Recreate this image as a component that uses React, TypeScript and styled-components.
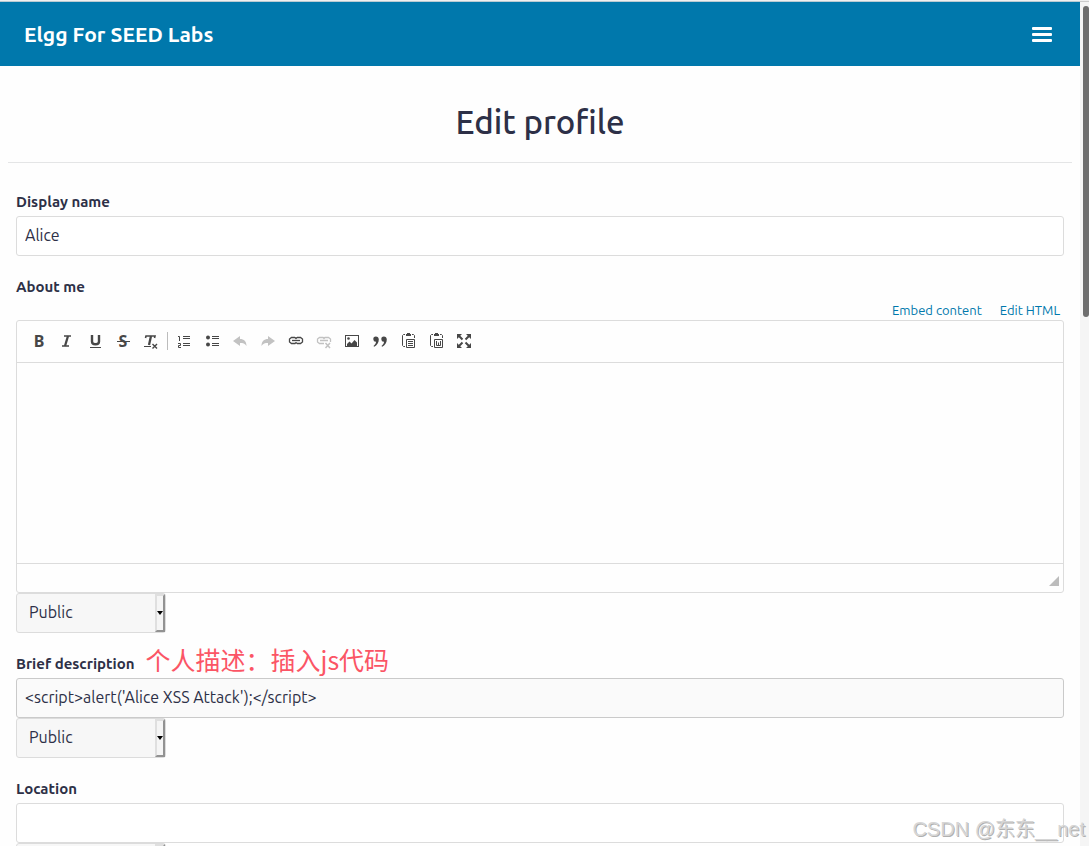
import React from "react";
import styled, { createGlobalStyle } from "styled-components";

const GlobalStyle = createGlobalStyle`
  *, *::before, *::after { box-sizing: border-box; }
  body {
    margin: 0;
    background: #fefefe;
    color: #2d3047;
    font-family: Ubuntu, "Noto Sans", "Noto Sans CJK SC", sans-serif;
    font-size: 16px;
  }
  button, input, select, textarea { font: inherit; color: inherit; }
`;

const Viewport = styled.div`
  position: relative;
  display: grid;
  grid-template-columns: minmax(0, 1fr) 9px;
  height: 100vh;
  overflow: hidden;
  border-top: 1px solid #f0f0f0;
`;

const Page = styled.div`
  overflow: hidden;
  border-top: 1px solid #b9cbd3;
`;

const ScrollTrack = styled.div`
  padding: 4px 0 0 3px;
  background: #f5f5f5;
  border-top: 1px solid #cccccc;
`;

const ScrollThumb = styled.div`
  height: 37%;
  border-radius: 3px;
  background: #6e6e6e;
`;

const Topbar = styled.header`
  display: flex;
  align-items: center;
  justify-content: space-between;
  height: 64px;
  padding: 0 28px 0 24px;
  background: #0078ac;
`;

const SiteLink = styled.a`
  color: #ffffff;
  font-size: 21px;
  font-weight: 700;
  text-decoration: none;
`;

const MenuButton = styled.button`
  display: flex;
  flex-direction: column;
  gap: 3px;
  width: 20px;
  padding: 0;
  border: 0;
  background: none;
`;

const MenuBar = styled.span`
  height: 3px;
  border-radius: 1px;
  background: #ffffff;
`;

const Main = styled.main`
  padding: 0 8px;
`;

const TitleRow = styled.div`
  display: flex;
  align-items: center;
  justify-content: center;
  height: 97px;
  padding-top: 16px;
  border-bottom: 1px solid #e4e5e6;
`;

const Title = styled.h1`
  margin: 0;
  font-size: 33px;
  font-weight: 500;
  line-height: 40px;
`;

const Form = styled.form`
  display: flex;
  flex-direction: column;
  gap: 20px;
  padding: 28px 8px 0;
`;

const Field = styled.div`
  display: flex;
  flex-direction: column;
`;

const LabelRow = styled.div`
  display: flex;
  align-items: center;
  gap: 11px;
  height: 25px;
  padding-bottom: 3px;
`;

const Label = styled.label`
  font-size: 15px;
  font-weight: 700;
  line-height: 22px;
`;

const Note = styled.span`
  padding-bottom: 10px;
  color: #fb5565;
  font-family: "Noto Sans CJK SC", sans-serif;
  font-size: 25px;
  line-height: 22px;
  white-space: nowrap;
`;

const TextInput = styled.input<{ $active?: boolean }>`
  width: 100%;
  height: 40px;
  padding: 0 8px 2px;
  border: 1px solid ${(p) => (p.$active ? "#cacaca" : "#dcdcdc")};
  border-radius: 3px;
  background: ${(p) => (p.$active ? "#fafafa" : "#ffffff")};
  outline: none;
`;

const EditorLinks = styled.nav`
  display: flex;
  justify-content: flex-end;
  gap: 18px;
  height: 19px;
  padding-right: 4px;
`;

const EditorLink = styled.a`
  color: #0078ac;
  font-size: 13px;
  line-height: 19px;
  text-decoration: none;
`;

const EditorBox = styled.div`
  border: 1px solid #dcdcdc;
  border-radius: 3px;
`;

const Toolbar = styled.div`
  display: flex;
  align-items: center;
  height: 42px;
  padding: 0 8px 2px;
  border-bottom: 1px solid #dcdcdc;
`;

const ToolButton = styled.button<{ $muted?: boolean }>`
  display: flex;
  align-items: center;
  justify-content: center;
  width: 28px;
  height: 28px;
  padding: 0;
  border: 0;
  background: none;
  color: ${(p) => (p.$muted ? "#c2c2c2" : "#474747")};

  svg { overflow: visible; }
`;

const ToolSeparator = styled.span`
  width: 1px;
  height: 18px;
  margin: 0 2px;
  background: #bcbcbc;
`;

const EditorArea = styled.textarea`
  display: block;
  width: 100%;
  height: 200px;
  padding: 12px;
  border: 0;
  background: transparent;
  outline: none;
  resize: none;
`;

const EditorFooter = styled.div`
  display: flex;
  align-items: flex-end;
  justify-content: flex-end;
  height: 29px;
  padding: 0 4px 6px;
  border-top: 1px solid #dcdcdc;
`;

const SelectWrap = styled.div`
  position: relative;
  width: 150px;
  height: 40px;
`;

const Select = styled.select`
  appearance: none;
  width: 100%;
  height: 100%;
  padding: 0 12px 2px;
  border: 1px solid #dcdcdc;
  border-radius: 3px;
  background: #f7f7f7;
  outline: none;
`;

const SelectArrow = styled.span`
  position: absolute;
  top: 1px;
  right: 1px;
  bottom: 1px;
  display: flex;
  align-items: center;
  justify-content: center;
  width: 10px;
  border: 2px solid;
  border-color: #dfdfdf #929292 #929292 #dfdfdf;
  background: #f5f5f5;
  pointer-events: none;
`;

const Watermark = styled.span`
  position: absolute;
  right: 4px;
  bottom: 4px;
  color: #d6d6d6;
  font-family: "Liberation Sans", "Noto Sans CJK SC", sans-serif;
  font-size: 20px;
  line-height: 26px;
  text-shadow: 1px 1px 0 #b0b0b0;
  pointer-events: none;
`;

function Icon({ children }: { children: React.ReactNode }) {
  return (
    <svg width="16" height="16" viewBox="0 0 16 16" fill="none" stroke="currentColor" aria-hidden="true">
      {children}
    </svg>
  );
}

function Letter({ x, children }: { x: number; children: string }) {
  return (
    <text
      x={x}
      y="14"
      textAnchor="middle"
      fill="currentColor"
      stroke="none"
      fontFamily="Noto Sans, sans-serif"
      fontWeight="700"
      fontSize="16"
    >
      {children}
    </text>
  );
}

const undoPath = "M1 8 L8 3 V6 C12 6 14.500 8.500 14.500 13 C13 10.500 11 10 8 10 V13 Z";
const quotePath = "M3.800 3.500 A2.600 2.600 0 1 0 4 8.700 C4 10.500 3 11.800 1.500 13 L2.200 13.800 C5 12.500 6.800 9.500 6.800 6.500 C6.800 4.700 5.600 3.500 3.800 3.500 Z";

function Clipboard({ children }: { children: React.ReactNode }) {
  return (
    <Icon>
      <path d="M5 1.500 H3.500 L2.500 2.500 V12.500 L3.500 13.500 H5 M12 1.500 H13.500 L14.500 2.500 V5" />
      <path d="M6 1 H7 V0 H10 V1 H11 V3 H6 Z" fill="currentColor" stroke="none" />
      <path d="M6.500 6.500 H14.500 V14.500 H6.500 Z" />
      {children}
    </Icon>
  );
}

type Tool = { name: string; muted?: boolean; icon: React.ReactNode };

const textTools: Tool[] = [
  { name: "Bold", icon: <Icon><Letter x={8}>B</Letter></Icon> },
  {
    name: "Italic",
    icon: (
      <Icon>
        <path d="M5 3 H12 M3 13 H10" strokeWidth="1.500" />
        <path d="M9 3 L6 13" strokeWidth="2.300" />
      </Icon>
    ),
  },
  {
    name: "Underline",
    icon: (
      <Icon>
        <path d="M5 2 V8.500 Q5 11.300 8.500 11.300 Q12 11.300 12 8.500 V2" strokeWidth="2.400" />
        <path d="M3 14.500 H14" />
      </Icon>
    ),
  },
  {
    name: "Strikethrough",
    icon: (
      <Icon>
        <Letter x={8}>S</Letter>
        <path d="M2 8.500 H15" />
      </Icon>
    ),
  },
  {
    name: "Remove format",
    icon: (
      <Icon>
        <path d="M2.500 5 L3 3 H12 L11.500 5" strokeWidth="1.600" />
        <path d="M8 3 L6 12" strokeWidth="2.300" />
        <path d="M1 13.500 H8" />
        <path d="M9.500 11 L14 15.500 M14 11 L9.500 15.500" strokeWidth="1.400" />
      </Icon>
    ),
  },
];

const blockTools: Tool[] = [
  {
    name: "Numbered list",
    icon: (
      <Icon>
        <path d="M7 3.500 H14 M7 5.500 H14 M7 10.500 H14 M7 12.500 H14" />
        <path d="M2 3.500 H3.500 V8 M2 10.500 H4.500 V12.500 H2.500 V14.500 H5" />
      </Icon>
    ),
  },
  {
    name: "Bulleted list",
    icon: (
      <Icon>
        <path d="M8 3.500 H15 M8 5.500 H15 M8 10.500 H15 M8 12.500 H15" />
        <circle cx="4" cy="4.500" r="2" fill="currentColor" stroke="none" />
        <circle cx="4" cy="11.500" r="2" fill="currentColor" stroke="none" />
      </Icon>
    ),
  },
  { name: "Undo", muted: true, icon: <Icon><path d={undoPath} fill="currentColor" stroke="none" /></Icon> },
  {
    name: "Redo",
    muted: true,
    icon: <Icon><path d={undoPath} transform="translate(16 0) scale(-1 1)" fill="currentColor" stroke="none" /></Icon>,
  },
  {
    name: "Link",
    icon: (
      <Icon>
        <path d="M7 4.500 H3.500 L1.500 6 V9 L3.500 10.500 H7 L8 9.500 M9 4.500 H12.500 L14.500 6 V9 L12.500 10.500 H9 M7 4.500 L8 5.500 L9 4.500 M8 9.500 L9 10.500" strokeWidth="1.300" />
        <path d="M4 7.500 H12" strokeWidth="1.300" />
      </Icon>
    ),
  },
  {
    name: "Unlink",
    muted: true,
    icon: (
      <Icon>
        <path d="M8 10.500 H3.500 L1.500 9 V6 L3.500 4.500 H7 L8 5.500 L9 4.500 H12.500 L14.500 6 V9 M4 7.500 H12" strokeWidth="1.300" />
        <path d="M9.500 10 L14 15 M14 10 L9.500 15" strokeWidth="1.500" />
      </Icon>
    ),
  },
  {
    name: "Image",
    icon: (
      <Icon>
        <rect x="1.500" y="2.500" width="13" height="11" />
        <circle cx="4.500" cy="5.500" r="1.300" fill="currentColor" stroke="none" />
        <path d="M3 13 V11 L5.500 8.500 L7.500 10.500 L10.500 7 L13 9.500 V13 Z" fill="currentColor" stroke="none" />
      </Icon>
    ),
  },
  {
    name: "Block quote",
    icon: (
      <Icon>
        <path d={quotePath} fill="currentColor" stroke="none" />
        <path d={quotePath} transform="translate(8 0)" fill="currentColor" stroke="none" />
      </Icon>
    ),
  },
  {
    name: "Paste as plain text",
    icon: <Clipboard><path d="M8 8.500 H13 M8 10.500 H13 M8 12.500 H13" /></Clipboard>,
  },
  {
    name: "Paste from Word",
    icon: <Clipboard><path d="M8.500 8 V12.500 H12.500 V8 M10.500 9.500 V12.500" /></Clipboard>,
  },
  {
    name: "Maximize",
    icon: (
      <Icon>
        <path d="M1 1 H6 L1 6 Z M15 1 H10 L15 6 Z M1 15 H6 L1 10 Z M15 15 H10 L15 10 Z" fill="currentColor" stroke="none" />
        <path d="M3 3 L6.500 6.500 M13 3 L9.500 6.500 M3 13 L6.500 9.500 M13 13 L9.500 9.500" strokeWidth="2" />
      </Icon>
    ),
  },
];

function Tools({ items }: { items: Tool[] }) {
  return (
    <>
      {items.map((t) => (
        <ToolButton key={t.name} type="button" aria-label={t.name} $muted={t.muted}>
          {t.icon}
        </ToolButton>
      ))}
    </>
  );
}

function AccessSelect({ label }: { label: string }) {
  return (
    <SelectWrap>
      <Select aria-label={label} defaultValue="public">
        <option value="public">Public</option>
      </Select>
      <SelectArrow>
        <svg width="6" height="4" viewBox="0 0 6 4" aria-hidden="true">
          <path d="M0 0 H6 L3 4 Z" fill="#000000" />
        </svg>
      </SelectArrow>
    </SelectWrap>
  );
}

export default function App() {
  return (
    <>
      <GlobalStyle />
      <Viewport>
        <Page>
          <Topbar>
            <SiteLink href="#">Elgg For SEED Labs</SiteLink>
            <MenuButton type="button" aria-label="Menu">
              <MenuBar />
              <MenuBar />
              <MenuBar />
            </MenuButton>
          </Topbar>
          <Main>
            <TitleRow>
              <Title>Edit profile</Title>
            </TitleRow>
            <Form>
              <Field>
                <LabelRow>
                  <Label htmlFor="name">Display name</Label>
                </LabelRow>
                <TextInput id="name" defaultValue="Alice" />
              </Field>
              <Field>
                <LabelRow>
                  <Label htmlFor="about">About me</Label>
                </LabelRow>
                <EditorLinks>
                  <EditorLink href="#">Embed content</EditorLink>
                  <EditorLink href="#">Edit HTML</EditorLink>
                </EditorLinks>
                <EditorBox>
                  <Toolbar>
                    <Tools items={textTools} />
                    <ToolSeparator />
                    <Tools items={blockTools} />
                  </Toolbar>
                  <EditorArea id="about" />
                  <EditorFooter>
                    <svg width="10" height="10" viewBox="0 0 10 10" aria-hidden="true">
                      <path d="M10 0 V10 H0 Z" fill="#bcbcbc" />
                    </svg>
                  </EditorFooter>
                </EditorBox>
                <AccessSelect label="About me access" />
              </Field>
              <Field>
                <LabelRow>
                  <Label htmlFor="brief">Brief description</Label>
                  <Note>个人描述：插入js代码</Note>
                </LabelRow>
                <TextInput id="brief" $active defaultValue="<script>alert('Alice XSS Attack');</script>" />
                <AccessSelect label="Brief description access" />
              </Field>
              <Field>
                <LabelRow>
                  <Label htmlFor="location">Location</Label>
                </LabelRow>
                <TextInput id="location" />
                <AccessSelect label="Location access" />
              </Field>
            </Form>
          </Main>
        </Page>
        <ScrollTrack>
          <ScrollThumb />
        </ScrollTrack>
        <Watermark>CSDN @东东__net</Watermark>
      </Viewport>
    </>
  );
}
